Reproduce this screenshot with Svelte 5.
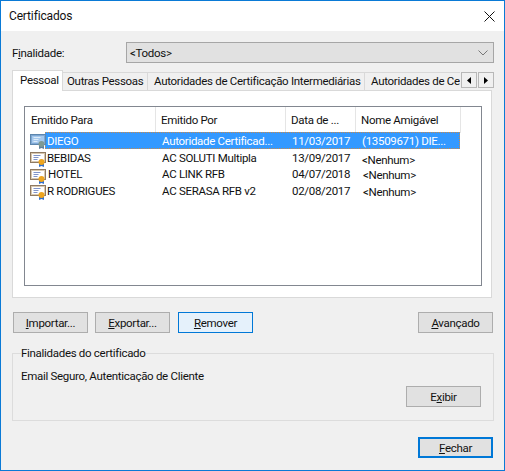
<script>
  const cols = ['Emitido Para', 'Emitido Por', 'Data de ...', 'Nome Amigável'];
  const rows = [
    { to: 'DIEGO', by: 'Autoridade Certificad...', date: '11/03/2017', name: '(13509671) DIE...', sel: true },
    { to: 'BEBIDAS', by: 'AC SOLUTI Multipla', date: '13/09/2017', name: '<Nenhum>' },
    { to: 'HOTEL', by: 'AC LINK RFB', date: '04/07/2018', name: '<Nenhum>' },
    { to: 'R RODRIGUES', by: 'AC SERASA RFB v2', date: '02/08/2017', name: '<Nenhum>' }
  ];
</script>

<div class="win">
  <header class="title">
    <span>Certificados</span>
    <svg class="close" width="11" height="11" viewBox="0 0 11 11"><path d="M.5.5l10 10M10.500.5l-10 10" stroke="#111" fill="none" /></svg>
  </header>
  <main class="body">
    <div class="purpose">
      <span class="label">F<u>i</u>nalidade:</span>
      <div class="select">
        <span>&lt;Todos&gt;</span>
        <svg width="10" height="6" viewBox="0 0 10 6"><path d="M.5.5L5 5 9.500.5" stroke="#777" fill="none" /></svg>
      </div>
    </div>
    <div class="tabs">
      <span class="tab active">Pessoal</span>
      <span class="tab t2">Outras Pessoas</span>
      <span class="tab t3">Autoridades de Certificação Intermediárias</span>
      <span class="tab t4">Autoridades de Ce</span>
      <div class="scroll">
        <span class="sb"><svg width="4" height="7" viewBox="0 0 4 7"><path d="M4 0v7L0 3.500z" /></svg></span>
        <span class="sb"><svg width="4" height="7" viewBox="0 0 4 7"><path d="M0 0v7l4-3.500z" /></svg></span>
      </div>
    </div>
    <section class="panel">
      <div class="list">
        <div class="head">
          {#each cols as c}<span>{c}</span>{/each}
        </div>
        <div class="rows">
          {#each rows as r}
            <div class="row" class:sel={r.sel}>
              <svg class="cert" width="17" height="15" viewBox="0 0 17 15">
                <rect x=".5" y=".5" width="15" height="10" fill={r.sel ? '#a5c8ec' : '#fff'} stroke={r.sel ? '#5d86ad' : '#8f7a62'} />
                <rect x="1.500" y="1.500" width="13" height="8" fill="none" stroke={r.sel ? '#7fa8d4' : '#d8c8b0'} />
                <path d="M3.500 3.500h7M3.500 5.500h5M3.500 7.500h4" stroke={r.sel ? '#dcebf9' : '#8194c8'} fill="none" />
                <path d="M9 11v4l2.500-1 2.500 1v-4" fill={r.sel ? '#5f7f9c' : '#2f6fd0'} />
                <circle cx="11.500" cy="10" r="3" fill={r.sel ? '#7f9a94' : '#eda520'} />
              </svg>
              <span class="to">{r.to}</span>
              <span class="by">{r.by}</span>
              <span class="date">{r.date}</span>
              <span class="name">{r.name}</span>
            </div>
          {/each}
        </div>
      </div>
    </section>
    <div class="actions">
      <button><u>I</u>mportar...</button>
      <button><u>E</u>xportar...</button>
      <button class="hot"><u>R</u>emover</button>
      <button class="adv"><u>A</u>vançado</button>
    </div>
    <fieldset>
      <legend>Finalidades do certificado</legend>
      <p>Email Seguro, Autenticação de Cliente</p>
      <div class="view"><button>E<u>x</u>ibir</button></div>
    </fieldset>
    <div class="foot"><button class="def"><u>F</u>echar</button></div>
  </main>
</div>

<style>
  :global(body) { margin: 0; }
  .win {
    width: 505px; height: 471px; box-sizing: border-box;
    border: 1px solid #0a7ad6; background: #f0f0f0;
    font: 11.5px/16px Roboto, "Noto Sans", sans-serif; letter-spacing: -0.3px; color: #111;
    display: flex; flex-direction: column; overflow: hidden;
  }
  .title {
    height: 30px; flex: none; background: #fff; display: flex; align-items: center;
    justify-content: space-between; padding: 0 9px 0 8px; font-size: 12px; letter-spacing: -0.15px;
  }
  .body { flex: 1; padding: 0 10px 0 11px; display: flex; flex-direction: column; }
  .purpose { display: flex; align-items: center; margin-top: 11px; height: 21px; }
  .label { width: 114px; }
  .select {
    width: 368px; height: 21px; box-sizing: border-box; border: 1px solid #a6a6a6; background: #e1e1e1;
    display: flex; align-items: center; justify-content: space-between; padding: 0 5px 0 3px;
  }
  .tabs { display: flex; align-items: flex-end; height: 20px; margin-top: 7px; position: relative; z-index: 1; }
  .tab {
    height: 18px; box-sizing: border-box; background: #f0f0f0; border: 1px solid #d9d9d9; border-bottom: 0;
    border-left: 0; line-height: 17px; white-space: nowrap; overflow: hidden; padding-left: 4px; flex: none;
  }
  .active {
    width: 51px; height: 21px; background: #fff; border-left: 1px solid #d9d9d9; margin-bottom: -1px;
    padding-left: 7px; line-height: 19px;
  }
  .t2 { width: 85px; }
  .t3 { width: 217px; padding-left: 6px; }
  .t4 { width: 95px; padding-left: 6px; border-right: 0; }
  .scroll { display: flex; gap: 1px; align-self: flex-start; margin-top: 2px; margin-left: 1px; }
  .sb {
    width: 16px; height: 16px; box-sizing: border-box; border: 1px solid #b8b8b8; background: #f0f0f0;
    display: flex; align-items: center; justify-content: center;
  }
  .panel {
    width: 480px; height: 208px; box-sizing: border-box; background: #fff; border: 1px solid #d9d9d9;
    padding: 15px 9px 15px 11px;
  }
  .list { height: 180px; box-sizing: border-box; border: 1px solid #828790; background: #fff; }
  .head, .row { display: grid; grid-template-columns: 131px 130px 70px 105px; }
  .head { height: 25px; line-height: 26px; }
  .head span { padding-left: 5px; border-right: 1px solid #e5e5e5; white-space: nowrap; }
  .head span:first-child { padding-left: 6px; }
  .row { height: 17px; line-height: 19px; position: relative; }
  .row:nth-child(2) { height: 16px; }
  .row span { white-space: nowrap; }
  .to { padding-left: 22px; }
  .by, .date, .name { padding-left: 6px; }
  .row:nth-child(2) .name { padding-top: 2px; }
  .row:nth-child(3) .to { padding-left: 23px; }
  .row:nth-child(3) .name, .row:nth-child(4) .name { padding-left: 7px; padding-top: 1px; }
  .row.sel { color: #fff; }
  .row.sel::before {
    content: ""; position: absolute; left: 20px; width: 415px; top: 0; bottom: 0;
    background: #3399ff; outline: 1px dotted #c98a4a; outline-offset: -1px;
  }
  .row.sel span { position: relative; }
  .cert { position: absolute; left: 5px; top: 3px; z-index: 1; }
  .row.sel .cert { top: 2px; }
  .row:nth-child(3) .cert { top: 4px; }
  .actions { display: flex; margin-top: 14px; padding: 0 1px; }
  button {
    width: 75px; height: 21px; box-sizing: border-box; padding: 0; border: 1px solid #adadad; background: #e1e1e1;
    font: inherit; letter-spacing: inherit; color: #111;
  }
  .actions button + button { margin-left: 7px; }
  .actions .hot { margin-left: 8px; border-color: #0078d7; background: #e5f1fb; }
  .actions .adv { margin-left: auto; }
  fieldset {
    margin: 13px 0 0; padding: 0 12px 0 8px; height: 75px; width: 482px; box-sizing: border-box;
    border: 1px solid #dcdcdc;
  }
  legend { padding: 0; line-height: 14px; }
  p { margin: 8px 0 0; line-height: 16px; }
  .view { display: flex; justify-content: flex-end; margin-top: 2px; }
  .foot { display: flex; justify-content: flex-end; margin-top: 16px; padding-right: 1px; }
  .def { border: 2px solid #0078d7; }
  u { text-underline-offset: 1px; }
</style>
